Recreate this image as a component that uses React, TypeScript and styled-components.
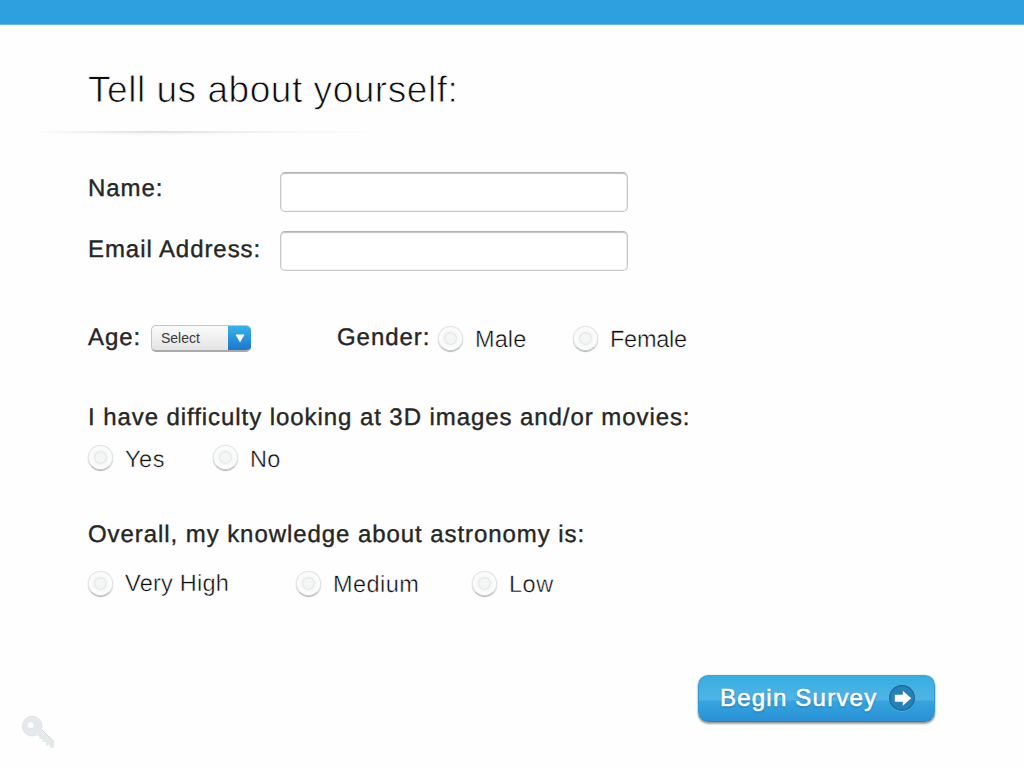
import React, { useState } from "react";
import styled, { createGlobalStyle, css } from "styled-components";

const GlobalStyle = createGlobalStyle`
  * { box-sizing: border-box; }
  body { margin: 0; background: #fefefe; }
`;

const Page = styled.div`
  width: 1024px;
  height: 768px;
  display: flex;
  flex-direction: column;
  overflow: hidden;
  background: #fefefe;
  color: #262626;
  font-family: "Liberation Sans", Arial, Helvetica, sans-serif;
  text-rendering: geometricPrecision;
`;

const TopBar = styled.div`
  height: 25px;
  flex: none;
  background: #2fa0df;
  border-bottom: 1px solid #62b7e5;
`;

const Title = styled.h1`
  margin: 44px 0 0 88px;
  font-size: 37px;
  line-height: 41px;
  font-weight: 400;
  letter-spacing: 0.54px;
  color: #0c0c0c;
  -webkit-text-stroke: 0.8px #fefefe;
`;

const Divider = styled.div`
  width: 350px;
  height: 5px;
  margin: 21px 0 0 40px;
  background: radial-gradient(ellipse 38% 100% at 33% 0, rgba(0, 0, 0, 0.07), transparent),
    linear-gradient(90deg, transparent, rgba(0, 0, 0, 0.06) 33%, transparent) top / 100% 2px no-repeat;
`;

const Form = styled.form`
  flex: 1;
  display: flex;
  flex-direction: column;
  padding-left: 88px;
`;

const Row = styled.div<{ $top: number; $height: number }>`
  display: flex;
  align-items: flex-start;
  flex: none;
  margin-top: ${(p) => p.$top}px;
  height: ${(p) => p.$height}px;
`;

const Label = styled.span<{ $width?: number; $drop?: number }>`
  flex: none;
  ${(p) => p.$width && css`width: ${p.$width}px;`}
  margin-top: ${(p) => p.$drop ?? 0}px;
  font-size: 24px;
  line-height: 28px;
  letter-spacing: 0.93px;
  white-space: nowrap;
  -webkit-text-stroke: 0.38px #262626;
`;

const TextInput = styled.input`
  width: 348px;
  height: 40px;
  padding: 0 12px;
  font: 20px "Liberation Sans", Arial, sans-serif;
  border: 1px solid #c6caca;
  border-top-color: #b2b5b5;
  border-radius: 5px;
  outline: none;
  background: #fff;
  box-shadow: inset 0 1px 1px rgba(0, 0, 0, 0.2), inset 0 0 1px 1px rgba(0, 0, 0, 0.06);
`;

const Select = styled.button`
  display: flex;
  width: 100px;
  height: 27px;
  margin: 1px 86px 0 0;
  padding: 0;
  overflow: hidden;
  border: 1px solid #c4c4c4;
  border-bottom: 2px solid #a9a9a9;
  border-right: 0;
  border-radius: 5px;
  background: linear-gradient(#fbfbfb, #e4e4e4);
  color: #3b3b3b;
  font: 14px/25px "Liberation Sans", Arial, sans-serif;
  text-align: left;
`;

const SelectText = styled.span`
  flex: 1;
  padding-left: 9px;
`;

const SelectArrow = styled.span`
  display: flex;
  align-items: center;
  justify-content: center;
  width: 23px;
  height: 27px;
  margin: -1px 0 -2px;
  background: linear-gradient(#35b3ea, #1b74cc);
  border-top: 1px solid #3fa0cf;
  border-bottom: 1px solid #2467a8;
`;

const RadioItem = styled.label<{ $width?: number; $textDrop: number; $track: number }>`
  display: flex;
  flex: none;
  ${(p) => p.$width && css`width: ${p.$width}px;`}
  span {
    margin: ${(p) => p.$textDrop}px 0 0 12px;
    font-size: 23.5px;
    line-height: 26px;
    letter-spacing: ${(p) => p.$track}px;
    white-space: nowrap;
    color: #0c0c0c;
    -webkit-text-stroke: 0.42px #fefefe;
  }
`;

const RadioDot = styled.input`
  appearance: none;
  flex: none;
  width: 25px;
  height: 25px;
  margin: 0;
  border-radius: 50%;
  border: 1px solid #e2e3e3;
  border-bottom-color: #c4c5c5;
  background: radial-gradient(circle at 50% 50%, #f4f6f6 0 4.8px, #e3e6e6 5.6px, #f5f6f6 6.8px, #fbfbfb 9px);
  box-shadow: inset 0 0 0 1px #fcfcfc, 0 1px 1px rgba(0, 0, 0, 0.28), 0 0 1px rgba(0, 0, 0, 0.14);
  &:checked {
    background: radial-gradient(circle, #2fa0df 0 5px, #f8f9f9 6px);
  }
`;

const Submit = styled.button`
  display: flex;
  align-items: center;
  align-self: flex-start;
  width: 237px;
  height: 47px;
  margin: 79px 0 0 610px;
  padding: 0 0 2px 21px;
  border: 1px solid #2b8fc4;
  border-color: #3aa9d6 #3199d0 #2680ba;
  border-radius: 10px;
  background: linear-gradient(#36addf 0, #46b1e3 30%, #50b4e5 54%, #35a5e0 55%, #2991d5 100%);
  box-shadow: 0 2px 2px rgba(0, 0, 0, 0.36), 0 0 2px rgba(0, 0, 0, 0.22);
  color: #fff;
  font-family: inherit;
`;

const SubmitText = styled.span`
  width: 168px;
  font-size: 24px;
  line-height: 28px;
  letter-spacing: 1.22px;
  text-align: left;
  white-space: nowrap;
  -webkit-text-stroke: 0.6px #fff;
  text-shadow: 0 1px 2px rgba(0, 50, 100, 0.6);
`;

const Key = styled.svg`
  position: absolute;
  left: 20px;
  top: 714px;
`;

type Choice = { text: string; width?: number; drop: number; track: number };

function Radios({ name, choices }: { name: string; choices: Choice[] }) {
  const [value, setValue] = useState("");
  return (
    <>
      {choices.map((c) => (
        <RadioItem key={c.text} $width={c.width} $textDrop={c.drop} $track={c.track}>
          <RadioDot type="radio" name={name} checked={value === c.text} onChange={() => setValue(c.text)} />
          <span>{c.text}</span>
        </RadioItem>
      ))}
    </>
  );
}

export default function App() {
  return (
    <Page>
      <GlobalStyle />
      <TopBar />
      <Title>Tell us about yourself:</Title>
      <Divider />
      <Form onSubmit={(e) => e.preventDefault()}>
        <Row $top={36} $height={40}>
          <Label $width={192} $drop={3}>Name:</Label>
          <TextInput aria-label="Name" />
        </Row>
        <Row $top={19} $height={40}>
          <Label $width={192} $drop={5}>Email Address:</Label>
          <TextInput aria-label="Email Address" />
        </Row>
        <Row $top={53} $height={27}>
          <Label $width={63}>Age:</Label>
          <Select type="button">
            <SelectText>Select</SelectText>
            <SelectArrow>
              <svg width="10" height="9" viewBox="0 0 10 9">
                <path d="M0.5 0.5h9L5 8.5z" fill="#fff" />
              </svg>
            </SelectArrow>
          </Select>
          <Label $width={101}>Gender:</Label>
          <Row $top={2} $height={25}>
            <Radios
              name="gender"
              choices={[
                { text: "Male", width: 135, drop: 0, track: 0.1 },
                { text: "Female", drop: 0, track: -0.25 },
              ]}
            />
          </Row>
        </Row>
        <Row $top={53} $height={26}>
          <Label>I have difficulty looking at 3D images and/or movies:</Label>
        </Row>
        <Row $top={15} $height={25}>
          <Radios
            name="difficulty"
            choices={[
              { text: "Yes", width: 125, drop: 1, track: 0.6 },
              { text: "No", drop: 1, track: 0.4 },
            ]}
          />
        </Row>
        <Row $top={51} $height={26}>
          <Label>Overall, my knowledge about astronomy is:</Label>
        </Row>
        <Row $top={24} $height={25}>
          <Radios
            name="knowledge"
            choices={[
              { text: "Very High", width: 208, drop: -1, track: 0.25 },
              { text: "Medium", width: 176, drop: 0, track: 0.45 },
              { text: "Low", drop: 0, track: 0.5 },
            ]}
          />
        </Row>
        <Submit type="submit">
          <SubmitText>Begin Survey</SubmitText>
          <svg width="28" height="28" viewBox="0 0 28 28">
            <circle cx="14" cy="14.6" r="13" fill="#6cc3ea" />
            <circle cx="14" cy="14" r="13" fill="#2581b7" />
            <circle cx="14" cy="14" r="12.3" fill="none" stroke="#1c6d9f" strokeWidth="1.2" />
            <path d="M6.800 10.800h8V6.800L23.200 14.300l-8.400 7.500V17.800h-8z" fill="#fff" />
          </svg>
        </Submit>
      </Form>
      <Key width="38" height="38" viewBox="0 0 38 38">
        <circle cx="12.200" cy="12.200" r="9.900" fill="#e4e9eb" stroke="#d3d8da" strokeWidth=".6" />
        <path d="M13 21.500L17 20.800L19.500 23.200V25H22.500V28H26V31.500L29.500 31V33.700H34V27.500L21.500 15.500z" fill="#e4e9eb" />
        <path d="M21.800 15.900L34 27.500" fill="none" stroke="#cfd4d6" strokeWidth=".9" />
        <circle cx="10.700" cy="11.200" r="3.600" fill="#fefefe" stroke="#d3d8da" strokeWidth=".6" />
      </Key>
    </Page>
  );
}
